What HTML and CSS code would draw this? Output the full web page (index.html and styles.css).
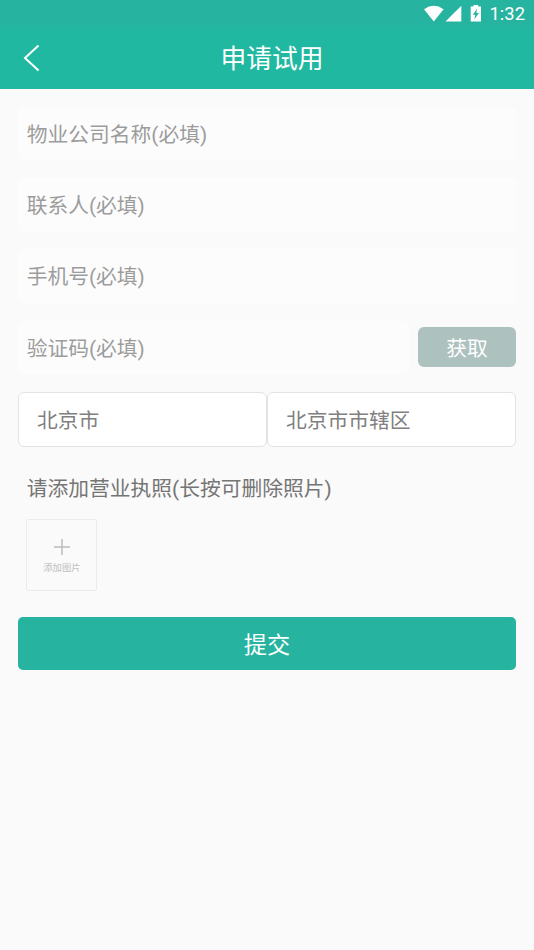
FILE: index.html
```html
<!DOCTYPE html>
<html lang="zh-CN">
<head>
<meta charset="utf-8">
<title>申请试用</title>
<link rel="stylesheet" href="styles.css">
</head>
<body>
<header class="header">
  <div class="status">
    <svg class="status-icons" width="58" height="18" viewBox="0 0 58 18" fill="#fff">
      <path d="M0 4.2Q9.8-2.6 19.6 4.2L9.8 16.6Z"/>
      <path d="M37.3.8V16.6H21.5Z"/>
      <path fill-rule="evenodd" d="M49.5 0H54.2V1.5H57V16.6H46.7V1.5H49.5ZM53 3.8L48.8 9.8H51.3L50.4 14.2L55 8H52.4Z"/>
    </svg>
    <span class="clock">1:32</span>
  </div>
  <div class="titlebar">
    <svg class="back" width="18" height="28" viewBox="0 0 18 28" fill="none" stroke="#fff" stroke-width="2"><path d="M15.5 1.5L2 14L15.5 26.5"/></svg>
    <h1 class="title">申请试用</h1>
  </div>
</header>
<main class="form">
  <div class="field">物业公司名称(必填)</div>
  <div class="field">联系人(必填)</div>
  <div class="field">手机号(必填)</div>
  <div class="code-row">
    <div class="field">验证码(必填)</div>
    <button class="get-code">获取</button>
  </div>
  <div class="region">
    <div class="select">北京市</div>
    <div class="select">北京市市辖区</div>
  </div>
  <p class="hint">请添加营业执照(长按可删除照片)</p>
  <div class="upload">
    <svg width="18" height="18" viewBox="0 0 18 18" stroke="#bcbcbc" stroke-width="1.5"><path d="M1 9H17M9 1V17"/></svg>
    <span>添加图片</span>
  </div>
  <button class="submit">提交</button>
</main>
</body>
</html>
```
FILE: styles.css
```css
* { box-sizing: border-box; }
body {
  margin: 0;
  min-height: 950px;
  background: #fafafa;
  font-family: Roboto, "Noto Sans CJK SC", sans-serif;
  font-size: 20.77px;
  font-weight: 400;
}
button {
  border: 0;
  padding: 0;
  font-family: inherit;
  font-weight: inherit;
  color: #fff;
}
.header {
  height: 89px;
  background: linear-gradient(#26b4a0, #26b4a0 24px, #20b8a0 32px);
  color: #fff;
}
.status {
  height: 27px;
  display: flex;
  justify-content: flex-end;
  align-items: center;
  padding-right: 9px;
}
.status-icons { margin: 0 8px 0 0; }
.clock {
  font-size: 18.4px;
  line-height: 26px;
}
.titlebar {
  height: 62px;
  display: grid;
  grid-template-columns: 65px 1fr 55px;
  align-items: center;
}
.back { margin-left: 23px; }
.title {
  margin: 0;
  padding-top: 2px;
  font-size: 25.8px;
  font-weight: inherit;
  line-height: 60px;
  text-align: center;
}
.form { padding: 18px 18px 0; }
.field {
  height: 53.4px;
  margin-bottom: 17.8px;
  padding-left: 8.7px;
  border-radius: 5px;
  background: #fcfcfc;
  color: #9c9c9c;
  line-height: 57.4px;
}
.code-row { display: flex; gap: 9px; }
.code-row .field { flex: 1; }
.get-code {
  width: 98px;
  height: 40px;
  margin-top: 6.4px;
  padding-top: 2px;
  border-radius: 6px;
  background: #adc1be;
  font-size: 20.77px;
  line-height: 40px;
}
.region { display: flex; }
.select {
  flex: 1;
  height: 55px;
  padding-left: 18px;
  border: 1px solid #e3e3e3;
  border-radius: 6px;
  background: #fff;
  color: #808080;
  line-height: 56px;
}
.hint {
  margin: 27px 0 15px 8.7px;
  color: #757575;
  line-height: 30px;
}
.upload {
  width: 71px;
  height: 72px;
  margin-left: 8px;
  display: flex;
  flex-direction: column;
  align-items: center;
  padding-top: 18px;
  border: 1px solid #ececec;
  border-radius: 2px;
  color: #c0c0c0;
  font-size: 9.4px;
  line-height: 14px;
}
.upload span { margin: 5px 0 0 1px; }
.submit {
  display: block;
  width: 100%;
  height: 53px;
  margin-top: 26px;
  padding-top: 2px;
  border-radius: 5px;
  background: #26b4a0;
  font-size: 23.2px;
  line-height: 53px;
}
```
